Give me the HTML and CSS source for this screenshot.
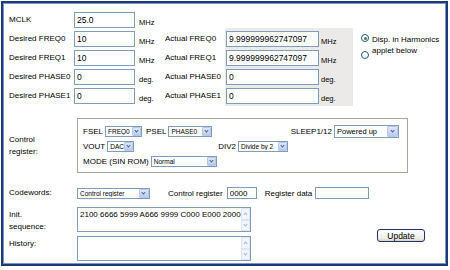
FILE: index.html
```html
<!DOCTYPE html>
<html lang="en">
<head>
    <meta charset="UTF-8">
    <title>AD9833 register calculator</title>
    <link rel="stylesheet" href="styles.css">
</head>
<body>
    <div class="frame">
        <div class="freq">
            <span class="lbl">MCLK</span>
            <input class="val" type="text" value="25.0">
            <span class="unit">MHz</span>

            <span class="lbl">Desired FREQ0</span>
            <input class="val" type="text" value="10">
            <span class="unit">MHz</span>
            <span class="act">Actual FREQ0</span>

            <span class="lbl">Desired FREQ1</span>
            <input class="val" type="text" value="10">
            <span class="unit">MHz</span>
            <span class="act">Actual FREQ1</span>

            <span class="lbl">Desired PHASE0</span>
            <input class="val" type="text" value="0">
            <span class="unit">deg.</span>
            <span class="act">Actual PHASE0</span>

            <span class="lbl">Desired PHASE1</span>
            <input class="val" type="text" value="0">
            <span class="unit">deg.</span>
            <span class="act">Actual PHASE1</span>

            <div class="actual">
                <input class="out" type="text" value="9.999999962747097" readonly>
                <span class="unit">MHz</span>
                <input class="out" type="text" value="9.999999962747097" readonly>
                <span class="unit">MHz</span>
                <input class="out" type="text" value="0" readonly>
                <span class="unit">deg.</span>
                <input class="out" type="text" value="0" readonly>
                <span class="unit">deg.</span>
            </div>

            <div class="radios">
                <label class="radio"><span class="dot on"></span>Disp. in Harmonics</label>
                <label class="radio second"><span class="dot"></span>applet below</label>
            </div>
        </div>

        <div class="ctrl">
            <span class="side">Control<br>register:</span>
            <div class="ctrl-box">
                <div class="ctrl-row">
                    <span>FSEL</span>
                    <span class="sel w-fsel"><span class="txt">FREQ0</span><span class="arr"></span></span>
                    <span class="gap">PSEL</span>
                    <span class="sel w-psel"><span class="txt">PHASE0</span><span class="arr"></span></span>
                    <span class="push">SLEEP1/12</span>
                    <span class="sel big w-sleep"><span class="txt">Powered up</span><span class="arr"></span></span>
                </div>
                <div class="ctrl-row">
                    <span>VOUT</span>
                    <span class="sel w-vout"><span class="txt">DAC</span><span class="arr"></span></span>
                    <span class="div2">DIV2</span>
                    <span class="sel w-div"><span class="txt">Divide by 2</span><span class="arr"></span></span>
                </div>
                <div class="ctrl-row">
                    <span>MODE (SIN ROM)</span>
                    <span class="sel w-mode"><span class="txt">Normal</span><span class="arr"></span></span>
                </div>
            </div>
        </div>

        <div class="code">
            <span class="side">Codewords:</span>
            <span class="sel w-code"><span class="txt">Control register</span><span class="arr"></span></span>
            <span class="cr">Control register</span>
            <input class="small w-reg" type="text" value="0000">
            <span class="rd">Register data</span>
            <input class="small w-data" type="text" value="">
        </div>

        <div class="bottom">
            <div class="areas">
                <div class="area-row">
                    <span class="side">Init.<br>sequence:</span>
                    <div class="area init">
                        <div class="area-text">2100 6666 5999 A666 9999 C000 E000 2000</div>
                        <div class="scroll"><span class="btn up"></span><span class="btn down"></span></div>
                    </div>
                </div>
                <div class="area-row">
                    <span class="side">History:</span>
                    <div class="area hist">
                        <div class="area-text"></div>
                        <div class="scroll"><span class="btn up"></span><span class="btn down"></span></div>
                    </div>
                </div>
            </div>
            <button type="button" class="update">Update</button>
        </div>
    </div>
</body>
</html>
```

FILE: styles.css
```css
/* applet panel */
body {
    margin: 0;
    background: #fff;
    font-family: "Liberation Sans", Arial, sans-serif;
    font-size: 8px;
    color: #000;
}

.frame {
    box-sizing: border-box;
    width: 447px;
    height: 265px;
    margin: 1px 0 0 1px;
    border: 2px solid #1b3a78;
    box-shadow: inset 0 0 0 1px #7d95c4;
    padding: 7px 0 0 6px;
}

input {
    box-sizing: border-box;
    border: 1px solid #7f9db9;
    background: #fff;
    font-family: "Liberation Sans", Arial, sans-serif;
    color: #000;
    margin: 0;
    padding: 0 2px;
    outline: none;
}

/* frequency / phase grid */
.freq {
    display: grid;
    grid-template-columns: 65px 63px 28px 60px 128px 1fr;
    grid-template-rows: repeat(5, 19px);
    align-items: center;
}

.lbl { grid-column: 1; }
.freq > .val { grid-column: 2; }
.freq > .unit { grid-column: 3; }
.act { grid-column: 4; }

.val, .out {
    height: 16px;
    font-size: 8.5px;
}

.val { width: 61px; }

.unit {
    font-size: 7.5px;
    align-self: end;
    padding: 0 0 2px 2px;
}

.actual {
    grid-column: 5;
    grid-row: 2 / 6;
    align-self: stretch;
    margin: -1px 0 -1px 0;
    background: #ebeae8;
    display: grid;
    grid-template-columns: 93px 1fr;
    grid-template-rows: repeat(4, 19px);
    align-items: center;
    padding: 1px 0 1px 1px;
}

.out { width: 93px; }

.radios {
    grid-column: 6;
    grid-row: 2 / 5;
    align-self: start;
    padding: 6px 0 0 8px;
}

.radio {
    display: flex;
    align-items: center;
    gap: 3px;
    line-height: 10px;
}

.radio.second {
    margin-top: 1px;
    align-items: flex-end;
}

.dot {
    box-sizing: border-box;
    width: 8px;
    height: 8px;
    border: 1px solid #1d5a8c;
    border-radius: 50%;
    background: #fff;
    flex: none;
    position: relative;
    top: -2px;
}

.second .dot { top: 3px; }

.dot.on::after {
    content: "";
    position: absolute;
    left: 1.5px;
    top: 1.5px;
    width: 3px;
    height: 3px;
    border-radius: 50%;
    background: #4b7a52;
}

/* control register */
.ctrl {
    display: flex;
    align-items: center;
    margin-top: 13px;
}

.side {
    width: 68px;
    flex: none;
    line-height: 12px;
}

.ctrl-box {
    box-sizing: border-box;
    width: 331px;
    height: 55px;
    border: 1px solid #a9a79d;
    box-shadow: inset 1px 1px 0 #fff;
    padding: 5px 8px 0 5px;
}

.ctrl-row {
    display: flex;
    align-items: center;
    height: 14px;
    margin-bottom: 1px;
}

.ctrl-row > span:not(.sel) { margin-right: 2px; }

.gap { margin-left: 4px; }
.push { margin-left: auto; }
.div2 { margin-left: 84px; }

/* combo boxes */
.sel {
    box-sizing: border-box;
    display: inline-flex;
    align-items: center;
    height: 11px;
    border: 1px solid #7f9db9;
    background: #fff;
    font-size: 6.5px;
    color: #000;
    padding-left: 2px;
}

.sel .txt { flex: 1; white-space: nowrap; overflow: hidden; }

.sel .arr {
    box-sizing: border-box;
    width: 9px;
    height: 9px;
    background: linear-gradient(#dfe8fb, #b8cbf5);
    border: 1px solid #b6c7ee;
    border-radius: 1px;
    position: relative;
}

.sel .arr::after {
    content: "";
    position: absolute;
    left: 2px;
    top: 1px;
    width: 2px;
    height: 2px;
    border-right: 1px solid #4d6185;
    border-bottom: 1px solid #4d6185;
    transform: rotate(45deg);
}

.sel.big {
    height: 13px;
    font-size: 7.5px;
}

.sel.big .arr { width: 11px; height: 11px; }
.sel.big .arr::after { left: 3px; top: 2px; }

.w-fsel { width: 37px; }
.w-psel { width: 44px; }
.w-sleep { width: 65px; }
.w-vout { width: 27px; }
.w-div { width: 50px; }
.w-mode { width: 66px; }
.w-code { width: 73px; }

.w-code .arr { width: 10px; }

/* codewords */
.code {
    display: flex;
    align-items: center;
    margin-top: 14px;
    height: 12px;
}

.cr { margin-left: 18px; margin-right: 4px; }
.rd { margin-left: 8px; margin-right: 3px; }

.small {
    height: 12px;
    font-size: 8px;
}

.w-reg { width: 30px; }
.w-data { width: 54px; }

/* sequences */
.bottom {
    display: flex;
    align-items: flex-start;
    margin-top: 8px;
}

.areas {
    display: flex;
    flex-direction: column;
    gap: 3px;
}

.area-row {
    display: flex;
    align-items: flex-start;
}

.area-row .side { padding-top: 2px; }

.area {
    box-sizing: border-box;
    display: flex;
    width: 174px;
    height: 25px;
    border: 1px solid #7f9db9;
    background: #fff;
}

.area-text {
    flex: 1;
    font-size: 8px;
    padding: 2px 0 0 2px;
    white-space: nowrap;
    overflow: hidden;
    color: #000;
}

.scroll {
    width: 9px;
    display: flex;
    flex-direction: column;
    background: #fbfbf9;
}

.btn {
    flex: 1;
    border: 1px solid #dfe5f2;
    background: #f2f5fb;
    position: relative;
}

.btn::after {
    content: "";
    position: absolute;
    left: 2px;
    width: 2px;
    height: 2px;
    border-right: 1px solid #aab6cc;
    border-bottom: 1px solid #aab6cc;
}

.up::after { top: 4px; transform: rotate(-135deg); }
.down::after { top: 2px; transform: rotate(45deg); }

.update {
    margin: 22px 0 0 126px;
    width: 48px;
    height: 13px;
    padding: 0;
    border: 1px solid #1f3561;
    border-radius: 3px;
    background: linear-gradient(#fff, #ecebe6 80%, #d6d0c5);
    font-family: "Liberation Sans", Arial, sans-serif;
    font-size: 8.5px;
    color: #000;
}
```
